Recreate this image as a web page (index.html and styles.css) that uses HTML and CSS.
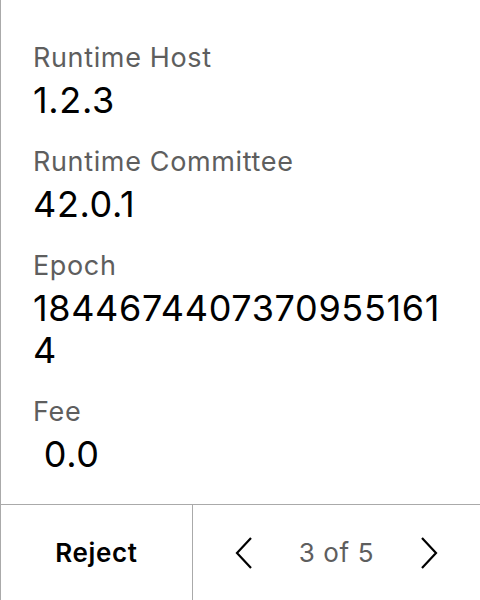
FILE: index.html
```html
<!DOCTYPE html>
<html>
<head>
<meta charset="utf-8">
<link rel="stylesheet" href="styles.css">
</head>
<body>
<div class="screen">
  <div class="fields">
    <div class="field">
      <div class="label">Runtime Host</div>
      <div class="value">1.2.3</div>
    </div>
    <div class="field">
      <div class="label">Runtime Committee</div>
      <div class="value">42.0.1</div>
    </div>
    <div class="field">
      <div class="label">Epoch</div>
      <div class="value">18446744073709551614</div>
    </div>
    <div class="field">
      <div class="label">Fee</div>
      <div class="value amount">&nbsp;0.0</div>
    </div>
  </div>
  <div class="actions">
    <div class="reject">Reject</div>
    <div class="pager">
      <svg class="chev" width="18" height="32" viewBox="0 0 18 32"><path d="M16 1 L2 16 L16 31" fill="none" stroke="#000" stroke-width="2.2"/></svg>
      <span class="count">3 of 5</span>
      <svg class="chev" width="18" height="32" viewBox="0 0 18 32"><path d="M2 1 L16 16 L2 31" fill="none" stroke="#000" stroke-width="2.2"/></svg>
    </div>
  </div>
</div>
</body>
</html>
```
FILE: styles.css
```css
html, body {
  margin: 0;
  padding: 0;
  background: #fff;
}
body {
  font-family: Inter, "Noto Sans", sans-serif;
  color: #000;
  letter-spacing: 0.04em;
}
.screen {
  width: 480px;
  height: 600px;
  box-sizing: border-box;
  border-left: 1px solid #aaa;
  display: flex;
  flex-direction: column;
}
.fields {
  flex: 1;
  padding: 42px 32px 0 32px;
  display: flex;
  flex-direction: column;
  gap: 25px;
}
.field {
  display: flex;
  flex-direction: column;
  gap: 5px;
}
.label {
  font-size: 27px;
  line-height: 32px;
  color: #5e5e5e;
}
.value {
  font-size: 36px;
  line-height: 42px;
  color: #000;
  word-break: break-all;
}
.actions {
  height: 96px;
  box-sizing: border-box;
  border-top: 1px solid #aaa;
  display: flex;
}
.reject {
  width: 192px;
  box-sizing: border-box;
  border-right: 1px solid #aaa;
  display: flex;
  align-items: center;
  justify-content: center;
  font-size: 26px;
  font-weight: 600;
}
.pager {
  flex: 1;
  display: flex;
  align-items: center;
  justify-content: center;
  gap: 46px;
}
.count {
  font-size: 26px;
  color: #5e5e5e;
}
```
